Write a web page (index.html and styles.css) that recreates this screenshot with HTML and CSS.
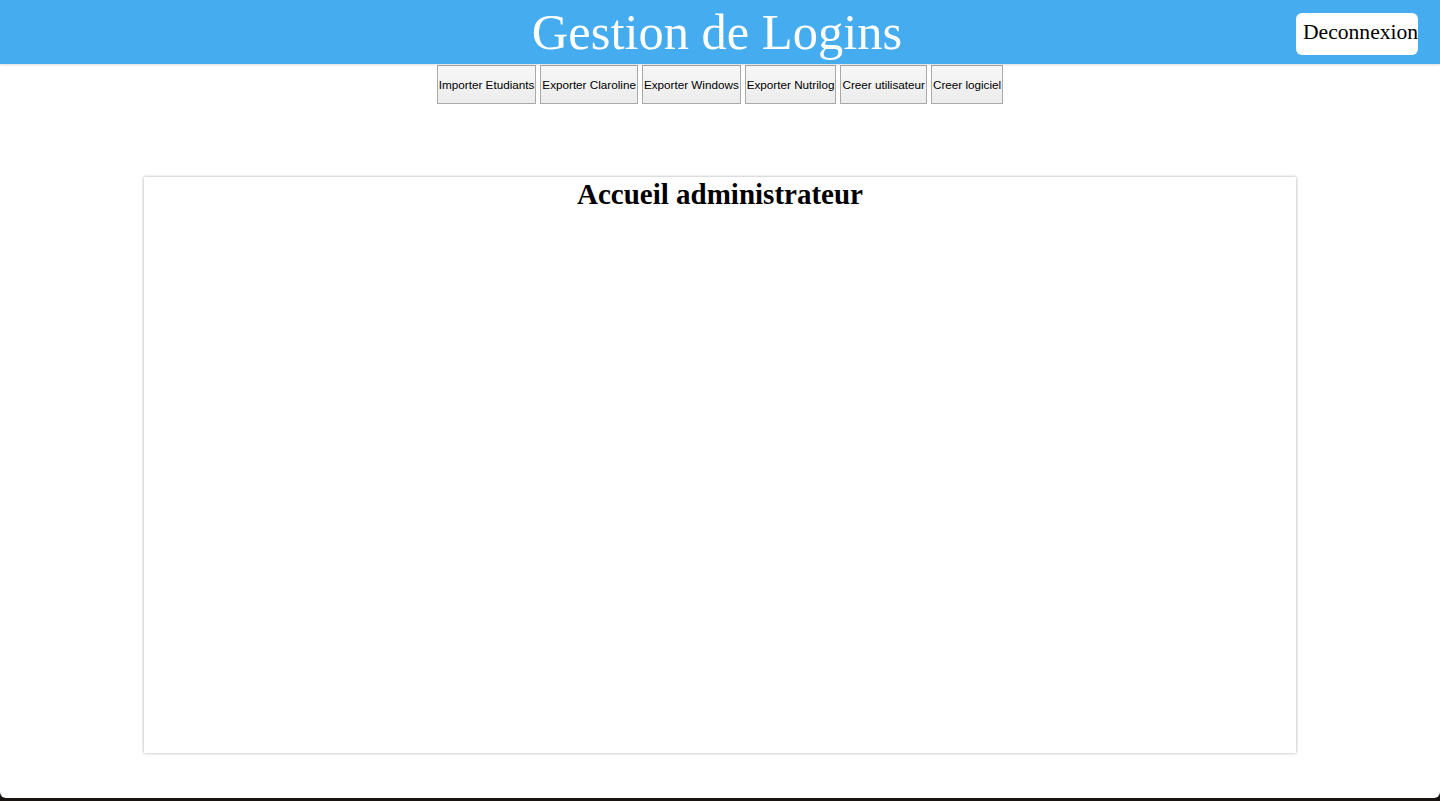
FILE: index.html
```html
<!DOCTYPE html>
<html lang="fr">
<head>
<meta charset="utf-8">
<title>Gestion de Logins</title>
<link rel="stylesheet" href="styles.css">
</head>
<body>
<div class="page">
  <header class="topbar">
    <h1 class="title">Gestion de Logins</h1>
    <button class="logout">Deconnexion</button>
  </header>
  <nav class="menu">
    <button class="menu-btn">Importer Etudiants</button>
    <button class="menu-btn">Exporter Claroline</button>
    <button class="menu-btn">Exporter Windows</button>
    <button class="menu-btn">Exporter Nutrilog</button>
    <button class="menu-btn">Creer utilisateur</button>
    <button class="menu-btn">Creer logiciel</button>
  </nav>
  <main class="content">
    <section class="card">
      <h2 class="card-title">Accueil administrateur</h2>
    </section>
  </main>
</div>
</body>
</html>
```

FILE: styles.css
```css
html, body {
  margin: 0;
  padding: 0;
  height: 100%;
  background: #1a1410;
}
.page {
  height: 798px;
  background: #ffffff;
  border-radius: 0 0 6px 6px;
  display: flex;
  flex-direction: column;
  overflow: hidden;
}
.topbar {
  position: relative;
  height: 64px;
  background: #45acef;
  box-shadow: 0 1px 2px rgba(0,0,0,0.15);
  display: flex;
  align-items: center;
  justify-content: center;
  flex-shrink: 0;
  z-index: 1;
}
.title {
  margin: 0;
  font-family: "Liberation Serif", "Times New Roman", serif;
  font-weight: normal;
  font-size: 50.5px;
  color: #ffffff;
  line-height: 64px;
  padding-right: 6px;
}
.logout {
  position: absolute;
  left: 1296px;
  top: 13px;
  width: 122px;
  height: 42px;
  padding: 0 0 3px 7px;
  border: none;
  border-radius: 6px;
  background: #ffffff;
  font-family: "Liberation Serif", "Times New Roman", serif;
  font-size: 21.6px;
  color: #000;
  text-align: left;
  white-space: nowrap;
  overflow: visible;
}
.menu {
  display: flex;
  justify-content: center;
  gap: 4px;
  padding-top: 1px;
  padding-right: 0;
  flex-shrink: 0;
}
.menu-btn {
  height: 39px;
  padding: 0 1px;
  border: 1px solid #a9a9a9;
  background: linear-gradient(#f7f7f7, #ececec);
  font-family: "Liberation Sans", Arial, sans-serif;
  font-size: 11.7px;
  color: #000;
}
.content {
  display: flex;
  justify-content: center;
  padding-top: 73px;
}
.card {
  width: 1152px;
  height: 576px;
  background: #fff;
  box-shadow: 0 0 3px rgba(0,0,0,0.35);
}
.card-title {
  margin: 0;
  padding-top: 1px;
  text-align: center;
  font-family: "Liberation Serif", "Times New Roman", serif;
  font-weight: bold;
  font-size: 29px;
  line-height: 32px;
  color: #000;
}
```
